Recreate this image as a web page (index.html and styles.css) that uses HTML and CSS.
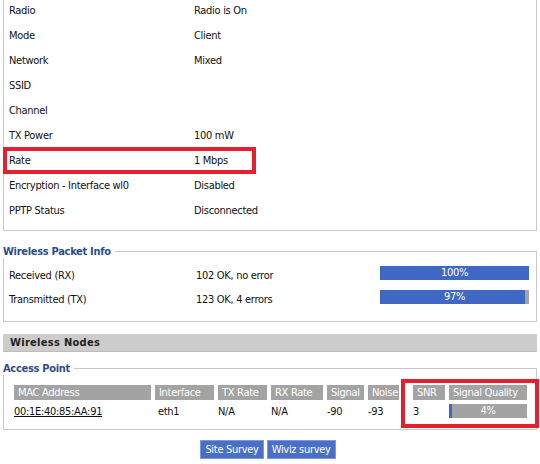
FILE: index.html
```html
<!DOCTYPE html>
<html>
<head>
<meta charset="utf-8">
<link rel="stylesheet" href="styles.css">
</head>
<body>
<div class="page">
  <div class="box top">
    <div class="row"><span>Radio</span><span>Radio is On</span></div>
    <div class="row"><span>Mode</span><span>Client</span></div>
    <div class="row"><span>Network</span><span>Mixed</span></div>
    <div class="row"><span>SSID</span><span></span></div>
    <div class="row"><span>Channel</span><span></span></div>
    <div class="row"><span>TX Power</span><span>100 mW</span></div>
    <div class="row mark-row"><span>Rate</span><span>1 Mbps</span><div class="mark mark-rate"></div></div>
    <div class="row"><span>Encryption - Interface wl0</span><span>Disabled</span></div>
    <div class="row"><span>PPTP Status</span><span>Disconnected</span></div>
  </div>

  <div class="legend l-packet">Wireless Packet Info</div>
  <div class="box packet">
    <div class="prow"><span>Received (RX)</span><span>102 OK, no error</span>
      <div class="bar"><div class="fill" style="width:100%"></div><span class="bar-text">100%</span></div></div>
    <div class="prow"><span>Transmitted (TX)</span><span>123 OK, 4 errors</span>
      <div class="bar"><div class="fill" style="width:97%"></div><span class="bar-text">97%</span></div></div>
  </div>

  <div class="section-title">Wireless Nodes</div>

  <div class="legend l-ap">Access Point</div>
  <div class="box ap">
    <div class="grid">
      <div class="th">MAC Address</div>
      <div class="th">Interface</div>
      <div class="th">TX Rate</div>
      <div class="th">RX Rate</div>
      <div class="th">Signal</div>
      <div class="th">Noise</div>
      <div class="sp"></div>
      <div class="th">SNR</div>
      <div class="th">Signal Quality</div>

      <div class="td"><a class="mac" href="#">00:1E:40:85:AA:91</a></div>
      <div class="td iface">eth1</div>
      <div class="td">N/A</div>
      <div class="td">N/A</div>
      <div class="td">-90</div>
      <div class="td">-93</div>
      <div class="sp"></div>
      <div class="td">3</div>
      <div class="td"><div class="bar sq"><div class="fill" style="width:4%"></div><span class="bar-text">4%</span></div></div>
    </div>
    <div class="mark mark-sq"></div>
  </div>

  <div class="buttons">
    <button class="btn">Site Survey</button>
    <button class="btn">Wiviz survey</button>
  </div>
</div>
</body>
</html>
```

FILE: styles.css
```css
html, body {
  margin: 0;
  padding: 0;
  background: #fff;
  overflow: hidden;
}
body {
  font-family: "DejaVu Sans Condensed", "Liberation Sans", sans-serif;
  font-size: 11px;
  letter-spacing: -0.3px;
  color: #111;
}
.page {
  padding: 0 3px;
}
.box {
  border: 1px solid #c9c9c9;
  position: relative;
}
.box.top {
  border-top: none;
  margin-top: -2px;
  padding-bottom: 7px;
}
.row {
  display: grid;
  grid-template-columns: 185px 1fr;
  height: 25px;
  align-items: center;
  padding-left: 5px;
  position: relative;
}
.mark {
  position: absolute;
  border: 4px solid #e3202b;
  box-sizing: border-box;
  pointer-events: none;
}
.mark-rate {
  left: -1px;
  top: -1px;
  width: 253px;
  height: 27px;
}
.legend {
  display: block;
  width: fit-content;
  position: relative;
  z-index: 1;
  background: #fff;
  color: #2e4c89;
  font-weight: bold;
  line-height: 13px;
  height: 13px;
  padding-right: 4px;
  margin-bottom: -7px;
}
.l-packet {
  margin-top: 14px;
}
.box.packet {
  padding: 11px 0 10px;
}
.prow {
  display: grid;
  grid-template-columns: 187px 184px 149px;
  height: 24px;
  align-items: center;
  padding-left: 5px;
}
.bar {
  position: relative;
  height: 14px;
  background: #a3a3a3;
  color: #fff;
  text-align: center;
  line-height: 14px;
  margin-bottom: 4px;
}
.fill {
  position: absolute;
  left: 0;
  top: 0;
  bottom: 0;
  background: #3f68c6;
}
.bar-text {
  position: relative;
}
.section-title {
  margin-top: 12px;
  height: 17px;
  line-height: 17px;
  background: #cccccc;
  border-bottom: 1px solid #bdbdbd;
  padding-left: 7px;
  font-weight: bold;
  font-size: 11px;
  letter-spacing: 0.3px;
  color: #222;
}
.l-ap {
  margin-top: 10px;
}
.box.ap {
  padding: 16px 0 10px 10px;
}
.grid {
  display: grid;
  grid-template-columns: 137px 59px 49px 52px 37px 31px 6px 32px 78px;
  column-gap: 4px;
  row-gap: 3px;
}
.th {
  background: #a3a3a3;
  color: #fff;
  height: 15px;
  line-height: 15px;
  padding-left: 4px;
  white-space: nowrap;
  overflow: hidden;
}
.td {
  height: 16px;
  display: flex;
  align-items: center;
  white-space: nowrap;
}
.td.iface {
  padding-left: 3px;
}
.mac {
  color: #111;
  text-decoration: underline;
}
.bar.sq {
  width: 78px;
  margin-bottom: 0;
}
.mark-sq {
  left: 397px;
  top: 10px;
  width: 138px;
  height: 49px;
}
.buttons {
  display: flex;
  justify-content: center;
  gap: 3px;
  margin-top: 10px;
  padding-right: 4px;
}
.btn {
  font-family: inherit;
  font-size: 11px;
  letter-spacing: -0.3px;
  background: #4a6fc6;
  color: #fff;
  border: 1px solid #7c98d8;
  height: 19px;
  padding: 0 4px;
  line-height: 17px;
}
```
